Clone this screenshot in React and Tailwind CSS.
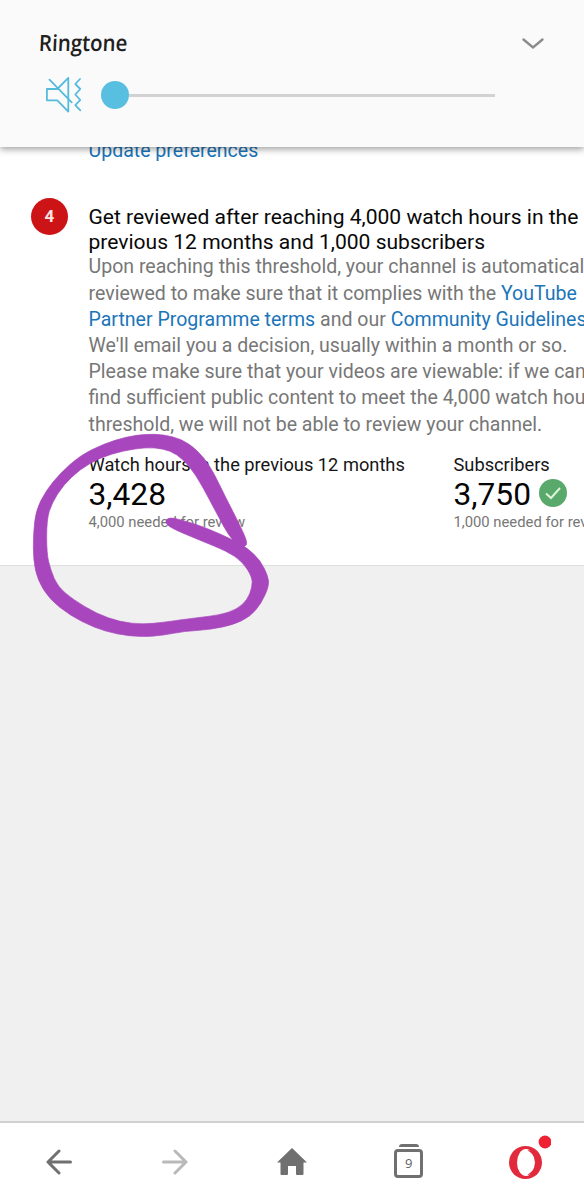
const OUTLINE = [
  [683, 368], [662, 320], [616, 230], [572, 140], [530, 88], [482, 56], [430, 44], [380, 42],
  [320, 50], [250, 72], [180, 107], [120, 160], [78, 212], [48, 270], [40, 340], [40, 420],
  [53, 480], [88, 537], [150, 586], [220, 622], [290, 643], [365, 651], [430, 646], [490, 634],
  [570, 629], [640, 614], [690, 590], [724, 550], [747, 498], [744, 468], [720, 420], [682, 384],
  [640, 360], [560, 324], [500, 304], [448, 291], [434, 305], [450, 323], [540, 361], [620, 393],
  [667, 425], [696, 470], [697, 500], [682, 540], [650, 568], [600, 585], [500, 597], [430, 607],
  [370, 613], [300, 606], [230, 581], [160, 539], [113, 500], [92, 450], [80, 400], [80, 300],
  [95, 250], [130, 195], [180, 148], [240, 113], [310, 92], [380, 82], [430, 86], [470, 102],
  [510, 140], [545, 195], [590, 280], [625, 345], [655, 378], [674, 382],
];

function smooth(points) {
  const n = points.length;
  const mid = (a, b) => `${(a[0] + b[0]) / 2} ${(a[1] + b[1]) / 2}`;
  let d = `M${mid(points[n - 1], points[0])}`;
  points.forEach((p, i) => {
    d += `Q${p[0]} ${p[1]} ${mid(p, points[(i + 1) % n])}`;
  });
  return d + "Z";
}

function VolumePanel() {
  return (
    <header className="relative z-10 h-[147px] shrink-0 bg-[#fafafa] pt-[30px] shadow-[0_2px_7px_rgba(0,0,0,0.4)]">
      <div className="flex h-7 items-center justify-between pl-[39px] pr-[40px]">
        <h1 className="-mt-[2px] origin-left scale-x-[0.91] -skew-x-3 font-['Open_Sans',sans-serif] text-[22.500px] font-semibold leading-7 text-[#202020]">
          Ringtone
        </h1>
        <svg className="-mt-px h-3 w-[22px]" viewBox="0 0 22 12" fill="none" stroke="#8b8b8b" strokeWidth="2.4" strokeLinecap="round">
          <path d="M1.500 1.500 11 9.500 20.500 1.500" />
        </svg>
      </div>
      <div className="mt-[17px] flex h-10 items-center pl-[45px]">
        <svg className="h-[36px] w-[38px] shrink-0" viewBox="0 0 38 36" fill="none" stroke="#55bbdd" strokeWidth="1.8" strokeLinejoin="round" strokeLinecap="round">
          <path d="M23.300 0.900V34.600L12.300 23.300H1.900V12H12.300ZM4.500 2.700 26.700 25.300" />
          <path d="M35 2 30.300 7 35.300 12 30.300 17.500 35.300 23 30.300 28.200 35.300 33.300" />
        </svg>
        <div className="ml-[18px] flex items-center">
          <span className="size-7 rounded-full bg-[#58bfe1]" />
          <span className="h-[3px] w-[366px] bg-[#d2d2d2]" />
        </div>
      </div>
    </header>
  );
}

const Link = ({ children }) => <a className="text-[#1b75b9]">{children}</a>;

function Review() {
  return (
    <section className="flex">
      <span className="ml-[31px] mr-[20.500px] flex size-[37px] shrink-0 items-center justify-center rounded-full bg-[#cc1316] pt-px text-[17px] font-bold text-[#fbe4e2]">
        4
      </span>
      <div className="whitespace-nowrap text-[19.550px] leading-[26.200px] text-[#777]">
        <h2 className="mt-[6px] text-[21.050px] leading-[25.400px] text-[#080808]">
          <div>Get reviewed after reaching 4,000 watch hours in the</div>
          <div>previous 12 months and 1,000 subscribers</div>
        </h2>
        <div>Upon reaching this threshold, your channel is automatically</div>
        <div>reviewed to make sure that it complies with the <Link>YouTube</Link></div>
        <div><Link>Partner Programme terms</Link> and our <Link>Community Guidelines</Link>.</div>
        <div>We'll email you a decision, usually within a month or so.</div>
        <div>Please make sure that your videos are viewable: if we can't</div>
        <div>find sufficient public content to meet the 4,000 watch hours</div>
        <div>threshold, we will not be able to review your channel.</div>
      </div>
    </section>
  );
}

function Stat({ label, value, note, className, children }) {
  return (
    <div className={`shrink-0 whitespace-nowrap ${className}`}>
      <div className="text-[18.250px] leading-6 text-[#151515]">{label}</div>
      <div className="flex h-9 items-center text-[31.700px] leading-9 text-[#050505]">
        {value}
        {children}
      </div>
      <div className="-mt-px text-[14.800px] leading-5 text-[#777]">{note}</div>
    </div>
  );
}

function NavBar() {
  return (
    <nav className="grid h-[79px] shrink-0 grid-cols-5 items-center justify-items-center border-t-2 border-[#d0d0d0] bg-white">
      <svg className="ml-px size-[26px]" viewBox="0 0 26 26" fill="none" stroke="#707070" strokeWidth="3" strokeLinecap="round" strokeLinejoin="round">
        <path d="M24.500 13H2M13 2 2 13 13 24" />
      </svg>
      <svg className="size-[26px]" viewBox="0 0 26 26" fill="none" stroke="#b9b9b9" strokeWidth="3" strokeLinecap="round" strokeLinejoin="round">
        <path d="M1.500 13H24M13 2 24 13 13 24" />
      </svg>
      <svg className="h-[27px] w-[30px]" viewBox="0 0 30 27" fill="#707070">
        <path d="M15 0 30 14.500H26.500V26Q26.500 27 25.500 27H20Q19 27 19 26V18H11V26Q11 27 10 27H4.500Q3.500 27 3.500 26V14.500H0Z" />
      </svg>
      <div className="mb-[2px] flex flex-col items-center">
        <span className="mb-[2px] h-[3px] w-5 rounded-t bg-[#707070]" />
        <span className="flex h-[29px] w-[29px] items-center justify-center rounded border-[3px] border-[#707070] font-['Open_Sans',sans-serif] text-[13px] leading-none text-[#606060]">
          9
        </span>
      </div>
      <svg className="mb-[10px] ml-2 h-[44px] w-[43px]" viewBox="0 0 43 44">
        <ellipse cx="17.500" cy="27.500" rx="16.500" ry="16.500" fill="#e12a3c" />
        <ellipse cx="18" cy="27.500" rx="9" ry="13.500" fill="#fff" />
        <path d="M19.500 15.500C25 14 30 19.500 30 27.500S25 41 19.500 39.500C24.500 37 27 33 27 27.500S24.500 18 19.500 15.500Z" fill="#e12a3c" />
        <circle cx="37" cy="7" r="6.400" fill="#ee2233" />
      </svg>
    </nav>
  );
}

export default function App() {
  return (
    <div className="relative flex h-[1200px] w-[584px] flex-col overflow-hidden bg-[#f0f0f0] font-[Roboto,sans-serif]">
      <VolumePanel />
      <main className="h-[419px] shrink-0 overflow-hidden border-b border-[#dedede] bg-white">
        <div className="-mt-[9px] mb-[33.500px] pl-[88.500px] text-[19.550px] leading-[26px]"><Link>Update preferences</Link></div>
        <Review />
        <div className="mt-[15.500px] flex pl-[88.500px]">
          <Stat className="w-[365px]" label="Watch hours in the previous 12 months" value="3,428" note="4,000 needed for review" />
          <Stat className="" label="Subscribers" value="3,750" note="1,000 needed for review">
            <svg className="mb-[5px] ml-[8.500px] size-7" viewBox="0 0 28 28">
              <circle cx="14" cy="14" r="14" fill="#5aa96c" />
              <path d="m7 14.500 5 4.500 9-10" fill="none" stroke="#def4d8" strokeWidth="2" />
            </svg>
          </Stat>
        </div>
      </main>
      <div className="grow" />
      <NavBar />
      <svg className="pointer-events-none absolute left-5 top-[420px] h-[230px] w-[280px]" viewBox="0 0 840 690">
        <path d={smooth(OUTLINE)} fill="#a847bd" stroke="#a847bd" strokeWidth="2" />
      </svg>
    </div>
  );
}
